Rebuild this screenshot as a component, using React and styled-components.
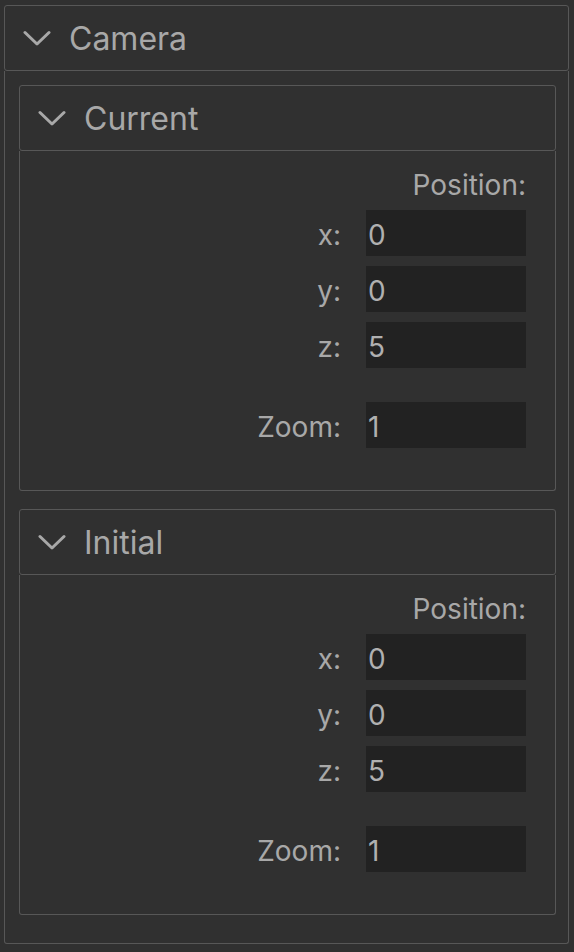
import React from "react";
import styled, { createGlobalStyle } from "styled-components";

const GlobalStyle = createGlobalStyle`
  html, body {
    margin: 0;
    padding: 0;
    background: #303030;
  }
  body {
    font-family: Inter, "Noto Sans", "Liberation Sans", sans-serif;
    color: #a8a8a8;
  }
`;

const Page = styled.div`
  padding: 5px 5px 0 4px;
  min-height: 952px;
  box-sizing: border-box;
`;

const Panel = styled.section`
  display: flex;
  flex-direction: column;
`;

const Header = styled.div`
  display: flex;
  align-items: center;
  gap: 18px;
  height: 66px;
  box-sizing: border-box;
  padding-left: 18px;
  border: 1px solid #575757;
  border-radius: 3px;
  font-size: 32px;
  color: #a8a8a8;
  cursor: pointer;
  user-select: none;
`;

const Title = styled.span`
  line-height: 1;
  padding-top: 2px;
`;

const Body = styled.div`
  border: 1px solid #575757;
  border-top: none;
  border-radius: 0 0 3px 3px;
  padding: 14px 12px 28px 14px;
  display: flex;
  flex-direction: column;
  gap: 18px;
`;

const Fields = styled.div`
  display: grid;
  grid-template-columns: 1fr 160px;
  column-gap: 25px;
  row-gap: 10px;
  border: 1px solid #575757;
  border-top: none;
  border-radius: 0 0 3px 3px;
  padding: 19px 29px 42px 28px;
  font-size: 28px;
`;

const Heading = styled.div`
  grid-column: 1 / -1;
  text-align: right;
  line-height: 30px;
`;

const Label = styled.label`
  justify-self: end;
  height: 46px;
  box-sizing: border-box;
  line-height: 42px;
  padding-top: 4px;
  margin-top: ${props => (props.spaced ? "24px" : "0")};
`;

const Value = styled.input`
  height: 46px;
  width: 160px;
  box-sizing: border-box;
  border: none;
  outline: none;
  background: #222222;
  color: #b0b0b0;
  font-family: inherit;
  font-size: 28px;
  padding: 3px 0 0 2px;
  margin-top: ${props => (props.spaced ? "24px" : "0")};
`;

const Chevron = () => (
  <svg width="28" height="17" viewBox="0 0 28 17" fill="none">
    <path
      d="M2 2.5 L14 14 L26 2.5"
      stroke="#a8a8a8"
      strokeWidth="3"
      strokeLinecap="round"
      strokeLinejoin="round"
    />
  </svg>
);

const CameraFields = ({ values }) => (
  <Fields>
    <Heading>Position:</Heading>
    {["x", "y", "z"].map(axis => (
      <React.Fragment key={axis}>
        <Label>{axis}:</Label>
        <Value defaultValue={values[axis]} readOnly />
      </React.Fragment>
    ))}
    <Label spaced>Zoom:</Label>
    <Value spaced defaultValue={values.zoom} readOnly />
  </Fields>
);

const SubPanel = ({ title, values }) => (
  <Panel>
    <Header>
      <Chevron />
      <Title>{title}</Title>
    </Header>
    <CameraFields values={values} />
  </Panel>
);

export default function App() {
  const cam = { x: 0, y: 0, z: 5, zoom: 1 };
  return (
    <>
      <GlobalStyle />
      <Page>
        <Panel>
          <Header>
            <Chevron />
            <Title>Camera</Title>
          </Header>
          <Body>
            <SubPanel title="Current" values={cam} />
            <SubPanel title="Initial" values={cam} />
          </Body>
        </Panel>
      </Page>
    </>
  );
}
